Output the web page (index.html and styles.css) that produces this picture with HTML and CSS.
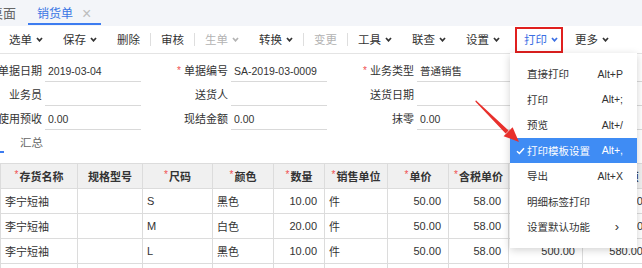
FILE: index.html
```html
<!DOCTYPE html>
<html lang="zh">
<head>
<meta charset="utf-8">
<title>销货单</title>
<link rel="stylesheet" href="styles.css">
</head>
<body>
<div class="page">
  <div class="tabs">
    <span class="tab-home">桌面</span>
    <div class="tab active"><span class="tab-text">销货单</span><span class="tab-close">×</span></div>
  </div>

  <div class="toolbar">
    <span class="tb-item first">选单<svg class="chev" viewBox="0 0 7 5"><polyline points="1,1 3.5,3.8 6,1"/></svg></span>
    <span class="tb-item">保存<svg class="chev" viewBox="0 0 7 5"><polyline points="1,1 3.5,3.8 6,1"/></svg></span>
    <span class="tb-item">删除</span>
    <span class="tb-sep"></span>
    <span class="tb-item">审核</span>
    <span class="tb-sep"></span>
    <span class="tb-item disabled">生单<svg class="chev" viewBox="0 0 7 5"><polyline points="1,1 3.5,3.8 6,1"/></svg></span>
    <span class="tb-item">转换<svg class="chev" viewBox="0 0 7 5"><polyline points="1,1 3.5,3.8 6,1"/></svg></span>
    <span class="tb-sep"></span>
    <span class="tb-item disabled">变更</span>
    <span class="tb-sep"></span>
    <span class="tb-item">工具<svg class="chev" viewBox="0 0 7 5"><polyline points="1,1 3.5,3.8 6,1"/></svg></span>
    <span class="tb-item">联查<svg class="chev" viewBox="0 0 7 5"><polyline points="1,1 3.5,3.8 6,1"/></svg></span>
    <span class="tb-item">设置<svg class="chev" viewBox="0 0 7 5"><polyline points="1,1 3.5,3.8 6,1"/></svg></span>
    <span class="tb-item print">打印<svg class="chev" viewBox="0 0 7 5"><polyline points="1,1 3.5,3.8 6,1"/></svg></span>
    <span class="tb-item">更多<svg class="chev" viewBox="0 0 7 5"><polyline points="1,1 3.5,3.8 6,1"/></svg></span>
  </div>

  <div class="form">
    <div class="form-row">
      <div class="field"><span class="flabel">单据日期</span><span class="fval">2019-03-04</span></div>
      <div class="field"><span class="flabel"><span class="req">*</span>单据编号</span><span class="fval">SA-2019-03-0009</span></div>
      <div class="field"><span class="flabel"><span class="req">*</span>业务类型</span><span class="fval">普通销售</span></div>
      <div class="field"><span class="flabel">客户</span><span class="fval"></span></div>
    </div>
    <div class="form-row">
      <div class="field"><span class="flabel">业务员</span><span class="fval"></span></div>
      <div class="field"><span class="flabel">送货人</span><span class="fval"></span></div>
      <div class="field"><span class="flabel">送货日期</span><span class="fval"></span></div>
      <div class="field"><span class="flabel">仓库</span><span class="fval"></span></div>
    </div>
    <div class="form-row">
      <div class="field"><span class="flabel">使用预收</span><span class="fval">0.00</span></div>
      <div class="field"><span class="flabel">现结金额</span><span class="fval">0.00</span></div>
      <div class="field"><span class="flabel">抹零</span><span class="fval">0.00</span></div>
      <div class="field"><span class="flabel">备注</span><span class="fval"></span></div>
    </div>
  </div>

  <div class="subtabs">
    <span class="subtab-mark"></span>
    <span class="subtab">汇总</span>
  </div>

  <table class="grid">
    <colgroup>
      <col class="c1"><col class="c2"><col class="c3"><col class="c4"><col class="c5">
      <col class="c6"><col class="c7"><col class="c8"><col class="c9"><col class="c10">
    </colgroup>
    <thead>
      <tr>
        <th><span class="req">*</span>存货名称</th>
        <th>规格型号</th>
        <th><span class="req">*</span>尺码</th>
        <th><span class="req">*</span>颜色</th>
        <th><span class="req">*</span>数量</th>
        <th><span class="req">*</span>销售单位</th>
        <th><span class="req">*</span>单价</th>
        <th><span class="req">*</span>含税单价</th>
        <th>金额</th>
        <th>含税金额</th>
      </tr>
    </thead>
    <tbody>
      <tr>
        <td>李宁短袖</td><td></td><td>S</td><td>黑色</td><td class="num">10.00</td><td>件</td>
        <td class="num">50.00</td><td class="num">58.00</td><td class="num">500.00</td><td class="num">580.00</td>
      </tr>
      <tr>
        <td>李宁短袖</td><td></td><td>M</td><td>白色</td><td class="num">20.00</td><td>件</td>
        <td class="num">50.00</td><td class="num">58.00</td><td class="num">1000.00</td><td class="num">1160.00</td>
      </tr>
      <tr>
        <td>李宁短袖</td><td></td><td>L</td><td>黑色</td><td class="num">10.00</td><td>件</td>
        <td class="num">50.00</td><td class="num">58.00</td><td class="num">500.00</td><td class="num">580.00</td>
      </tr>
      <tr>
        <td></td><td></td><td></td><td></td><td></td><td></td><td></td><td></td><td></td><td></td>
      </tr>
    </tbody>
  </table>

  <div class="menu">
    <div class="menu-item"><span>直接打印</span><span>Alt+P</span></div>
    <div class="menu-item"><span>打印</span><span>Alt+;</span></div>
    <div class="menu-item"><span>预览</span><span>Alt+/</span></div>
    <div class="menu-item active"><span><svg class="check" viewBox="0 0 9 8"><polyline points="1,4.2 3.4,6.5 8,1.2"/></svg>打印模板设置</span><span>Alt+,</span></div>
    <div class="menu-item"><span>导出</span><span>Alt+X</span></div>
    <div class="menu-item"><span>明细标签打印</span><span></span></div>
    <div class="menu-item"><span>设置默认功能</span><span class="sub">›</span></div>
  </div>

  <svg class="arrow" viewBox="0 0 642 268" width="642" height="268">
    <polygon points="476,100.3 477.2,101.5 508.6,130.4 505.6,133.4 475.3,101.4" />
    <polygon points="519,142 503.6,136.2 512.6,127.2" />
  </svg>
</div>
</body>
</html>
```

FILE: styles.css
```css
* { box-sizing: border-box; }

html, body {
  margin: 0;
  padding: 0;
}

body {
  font-family: "Liberation Sans", "Noto Sans CJK SC", sans-serif;
  color: #333;
  background: #fff;
  width: 642px;
  height: 268px;
  overflow: hidden;
}

.page {
  position: relative;
  width: 642px;
  height: 268px;
  overflow: hidden;
}

/* ---------- tab bar ---------- */
.tabs {
  height: 26px;
  background: #f3f5f9;
  display: flex;
  align-items: stretch;
}

.tab-home {
  font-size: 13px;
  line-height: 27px;
  color: #666;
  margin-left: -10px;
  margin-right: 12px;
  white-space: nowrap;
}

.tab {
  position: relative;
  display: flex;
  align-items: center;
  padding: 1px 10px 0 9px;
}

.tab::after {
  content: "";
  position: absolute;
  left: 0;
  right: 0;
  bottom: 1px;
  height: 2px;
  background: #3d7cf0;
}

.tab-text {
  font-size: 12px;
  color: #3a76e4;
  line-height: 16px;
}

.tab-close {
  margin-left: 9px;
  font-size: 16px;
  font-weight: 300;
  color: #bdbdbd;
  line-height: 16px;
}

/* ---------- toolbar ---------- */
.toolbar {
  height: 28px;
  border-bottom: 1px solid #e4e4e4;
  display: flex;
  align-items: center;
  font-size: 11.5px;
  background: #fff;
}

.tb-item {
  display: flex;
  align-items: center;
  padding: 0 10px;
  line-height: 16px;
  color: #333;
  white-space: nowrap;
}

.tb-item.first { padding-left: 9px; }

.tb-item.disabled { color: #b3b3b3; }

.chev {
  width: 7px;
  height: 5px;
  margin-left: 4px;
  fill: none;
  stroke: currentColor;
  stroke-width: 1.7;
}

.tb-sep {
  width: 1px;
  height: 13px;
  background: #dedede;
}

.tb-item.print {
  height: 26px;
  margin: 0 2px 0 5px;
  padding: 0 3px 0 7px;
  border: 2px solid #e0201f;
  color: #3b6fe3;
}

/* ---------- form ---------- */
.form {
  margin-left: -45px;
  padding-top: 4px;
}

.form-row {
  display: flex;
  height: 24px;
}

.field {
  display: flex;
  width: 186px;
  flex: none;
}

.flabel {
  width: 87px;
  text-align: right;
  font-size: 11px;
  line-height: 20px;
  padding-top: 3px;
  color: #333;
  white-space: nowrap;
}

.fval {
  width: 96px;
  height: 24px;
  margin-left: 3px;
  padding: 3px 0 0 3px;
  border-bottom: 1px solid #d9d9d9;
  font-size: 10.5px;
  line-height: 20px;
  color: #333;
  white-space: nowrap;
}

.req {
  color: #f05050;
  font-size: 10px;
  margin-right: 3px;
  position: relative;
  top: -1px;
}

/* ---------- sub tabs ---------- */
.subtabs {
  height: 33px;
  display: flex;
  align-items: flex-start;
  padding-top: 3px;
}

.subtab-mark {
  width: 4px;
  height: 2px;
  background: #3d7cf0;
  margin-top: 18px;
}

.subtab {
  margin-left: 16px;
  font-size: 11.5px;
  line-height: 20px;
  color: #666;
}

/* ---------- grid ---------- */
.grid {
  border-collapse: collapse;
  table-layout: fixed;
  width: 650px;
  font-size: 11px;
}

.c1 { width: 77px; }
.c2 { width: 65px; }
.c3 { width: 70px; }
.c4 { width: 61px; }
.c5 { width: 51px; }
.c6 { width: 63px; }
.c7 { width: 61px; }
.c8 { width: 60px; }
.c9 { width: 74px; }
.c10 { width: 68px; }

.grid th,
.grid td {
  border: 1px solid #dcdcdc;
  padding: 0 4px;
  white-space: nowrap;
  overflow: hidden;
}

.grid th {
  height: 25px;
  background: #f0f0f0;
  font-weight: bold;
  text-align: center;
  color: #333;
}

.grid td {
  height: 25px;
  color: #333;
}

.grid td.num {
  text-align: right;
  padding-right: 7px;
}

.grid .req {
  margin-right: 1px;
  top: -3px;
  font-weight: normal;
}

/* ---------- dropdown menu ---------- */
.menu {
  position: absolute;
  left: 510px;
  top: 53px;
  width: 127px;
  height: 195px;
  padding: 8px 0;
  background: #fff;
  box-shadow: 0 2px 8px rgba(0, 0, 0, 0.18);
  z-index: 5;
}

.menu-item {
  display: flex;
  justify-content: space-between;
  align-items: center;
  height: 25.5px;
  padding: 0 14px 0 17px;
  font-size: 10.5px;
  color: #333;
  white-space: nowrap;
}

.menu-item.active {
  background: #3f8cf4;
  color: #fff;
}

.check {
  width: 9px;
  height: 8px;
  margin-left: -11px;
  margin-right: 2px;
  fill: none;
  stroke: #fff;
  stroke-width: 1.5;
  vertical-align: -0.5px;
}

.sub {
  font-size: 13px;
  margin-right: 4px;
}

/* ---------- annotation arrow ---------- */
.arrow {
  position: absolute;
  left: 0;
  top: 0;
  z-index: 6;
  fill: #e8302c;
  pointer-events: none;
}
```
